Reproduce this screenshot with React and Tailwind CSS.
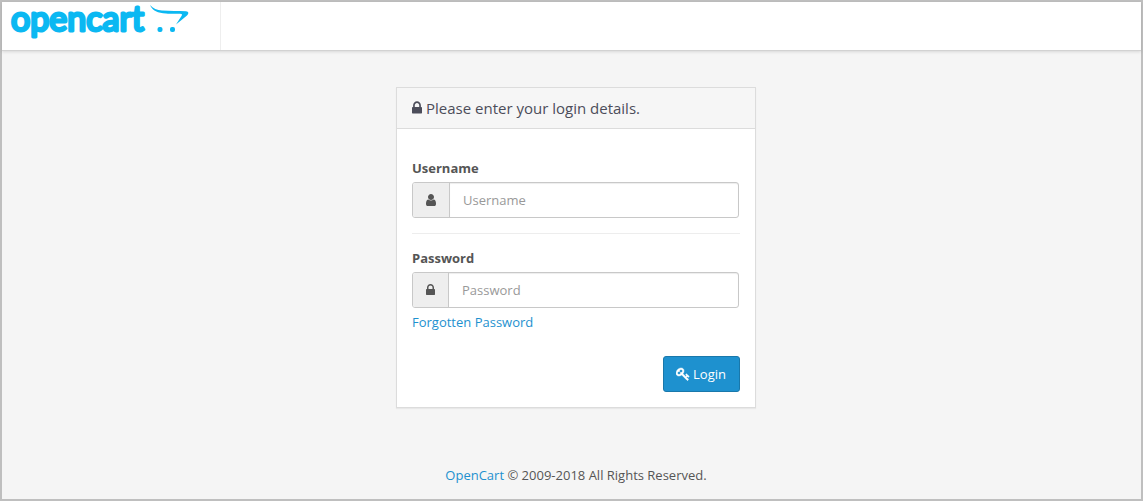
import React, { useState } from 'react';

const ICONS = {
  lock: {
    box: '0 0 1152 1792',
    d: 'M320 768h512v-192q0-106-75-181t-181-75-181 75-75 181v192zm832 96v576q0 40-28 68t-68 28h-960q-40 0-68-28t-28-68v-576q0-40 28-68t68-28h32v-192q0-184 132-316t316-132 316 132 132 316v192h32q40 0 68 28t28 68z',
  },
  user: {
    box: '0 0 1280 1792',
    d: 'M1280 1399q0 109-62.5 187t-150.5 78h-854q-88 0-150.5-78t-62.5-187q0-85 8.5-160.5t31.5-152 58.5-131 94-89 134.5-34.5q131 128 313 128t313-128q76 0 134.5 34.5t94 89 58.5 131 31.5 152 8.5 160.5zm-256-887q0 159-112.5 271.5t-271.5 112.5-271.5-112.5-112.5-271.5 112.5-271.5 271.5-112.5 271.5 112.5 112.5 271.5z',
  },
  key: {
    box: '0 0 1792 1792',
    d: 'M832 512q0-80-56-136t-136-56-136 56-56 136q0 42 19 83-41-19-83-19-80 0-136 56t-56 136 56 136 136 56 136-56 56-136q0-42-19-83 41 19 83 19 80 0 136-56t56-136zm851 704q0 17-49 66t-66 49q-9 0-28.5-16t-36.5-33-38.5-40-24.5-26l-96 96 220 220q28 28 28 68 0 42-39 81t-81 39q-40 0-68-28l-671-671q-176 131-365 131-163 0-265.5-102.5t-102.5-265.5q0-160 95-313t248-248 313-95q163 0 265.5 102.5t102.5 265.5q0 189-131 365l355 355 96-96q-3-3-26-24.5t-40-38.5-33-36.5-16-28.5q0-17 49-66t66-49q13 0 23 10 6 6 46 44.5t82 79.5 86.5 86 73 78 28.5 41z',
  },
};

const Icon = ({ name, className }) => (
  <svg viewBox={ICONS[name].box} fill="currentColor" className={className} aria-hidden="true">
    <path d={ICONS[name].d} />
  </svg>
);

const Logo = () => (
  <svg width="180" height="42" viewBox="0 0 180 42" fill="#0bb8f2" role="img" aria-label="opencart" className="overflow-visible">
    <text
      x="1" y="26" fontSize="34" fontWeight="400"
      stroke="#0bb8f2" strokeWidth="3" strokeLinejoin="round"
      className="font-['Lato',sans-serif]"
    >
      opencart
    </text>
    <path d="M140 0c3 3.500 7 5 12 5.500 8 .8 16 0 24 .8 2.800.4 3 2.200 1 4.200l-11 9 5.500-8.500c1-1.600.6-2.200-1.500-2.300-5-.2-10 .3-14-.1-8-.6-13.500-2.600-16-8.600z" />
    <rect x="147.500" y="22" width="5" height="5" rx="2" />
    <rect x="160" y="22" width="5" height="5" rx="2" />
  </svg>
);

const Field = ({ id, label, icon, iconClass, ...props }) => (
  <div className="flex flex-col gap-1">
    <label htmlFor={id} className="self-start font-bold leading-5">{label}</label>
    <div className="mr-px flex h-9 rounded-[3px] border border-[#c8c8c8] bg-white">
      <span className="flex items-center rounded-l-[2px] border-r border-[#c8c8c8] bg-[#eee] px-[13px]">
        <Icon name={icon} className={iconClass} />
      </span>
      <input
        id={id}
        name={id}
        placeholder={label}
        className="min-w-0 flex-1 rounded-r-[2px] px-[13px] shadow-[inset_0_1px_1px_rgba(0,0,0,0.075)] outline-none placeholder:text-[#999]"
        {...props}
      />
    </div>
  </div>
);

const LoginForm = () => {
  const [form, setForm] = useState({ username: '', password: '' });

  const set = (k) => (e) => setForm((f) => ({ ...f, [k]: e.target.value }));

  return (
    <section className="w-full max-w-[360px] border border-[#dcdcdc] bg-white shadow-[0_1px_1px_rgba(0,0,0,0.05)]">
      <h1 className="flex h-[41px] items-center gap-1 border-b border-[#dcdcdc] bg-[#f6f6f6] px-[15px] text-[15px] text-[#4c4d5a]">
        <Icon name="lock" className="h-4 w-2.5" />
        Please enter your login details.
      </h1>
      <form className="flex flex-col px-[15px] pt-[29px] pb-[15px]" onSubmit={(e) => e.preventDefault()}>
        <Field id="username" label="Username" icon="user" iconClass="h-3.5 w-2.5"
          type="text" value={form.username} onChange={set('username')} />
        <hr className="my-[15px] border-[#ededed]" />
        <div className="-mt-px">
          <Field id="password" label="Password" icon="lock" iconClass="h-3.5 w-[9px]"
            type="password" value={form.password} onChange={set('password')} />
        </div>
        <a href="#forgotten" className="mt-1 self-start leading-5 text-[#1e91cf]">Forgotten Password</a>
        <button type="submit"
          className="mt-6 flex h-9 items-center gap-[3px] self-end rounded-[3px] border border-[#1978ab] bg-[#1e91cf] pr-[13px] pl-3 text-white">
          <Icon name="key" className="size-3.5 stroke-current stroke-[60]" />
          Login
        </button>
      </form>
    </section>
  );
};

const App = () => (
  <div className="flex min-h-screen flex-col border-2 border-[#bfbfbf] bg-[#f5f5f5] font-['Open_Sans',sans-serif] text-[13px] leading-5 text-[#555]">
    <header className="flex h-[49px] border-b border-[#d2d2d2] bg-white shadow-[0_1px_3px_rgba(0,0,0,0.12)]">
      <a href="#home" className="border-r border-[#eee] pt-[3px] pr-[30px] pl-2">
        <Logo />
      </a>
    </header>
    <main className="flex justify-center pt-9 pl-[9px]">
      <LoginForm />
    </main>
    <footer className="pt-[57px] pb-3 pl-[9px] text-center">
      <a href="#opencart" className="text-[#1e91cf]">OpenCart</a> © 2009-2018 All Rights Reserved.
    </footer>
  </div>
);

export default App;
